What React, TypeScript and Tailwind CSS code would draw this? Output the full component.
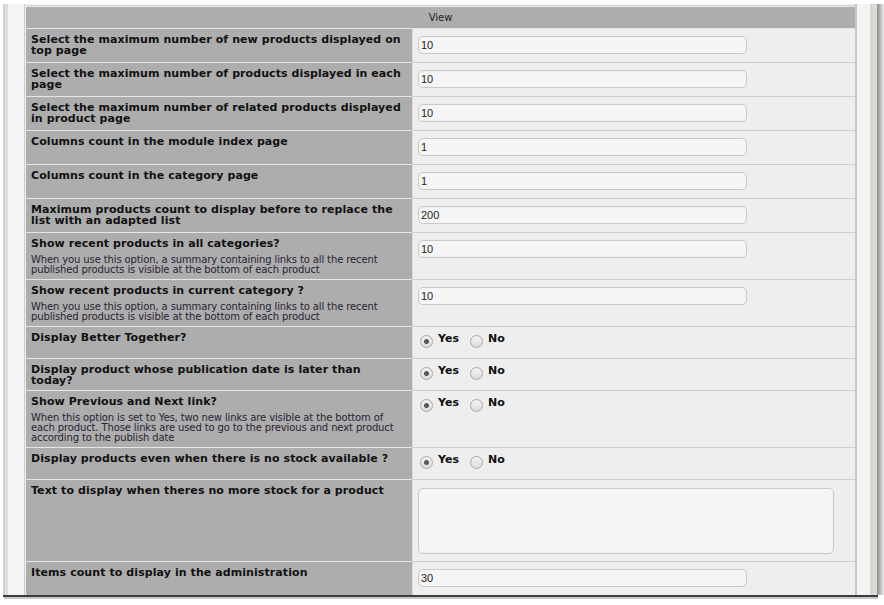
import React from 'react';

type Row = {
  label: string;
  help?: string;
  kind: 'text' | 'radio' | 'area';
  value?: string;
};

const rows: Row[] = [
  { label: 'Select the maximum number of new products displayed on top page', kind: 'text', value: '10' },
  { label: 'Select the maximum number of products displayed in each page', kind: 'text', value: '10' },
  { label: 'Select the maximum number of related products displayed in product page', kind: 'text', value: '10' },
  { label: 'Columns count in the module index page', kind: 'text', value: '1' },
  { label: 'Columns count in the category page', kind: 'text', value: '1' },
  { label: 'Maximum products count to display before to replace the list with an adapted list', kind: 'text', value: '200' },
  {
    label: 'Show recent products in all categories?',
    help: 'When you use this option, a summary containing links to all the recent published products is visible at the bottom of each product',
    kind: 'text',
    value: '10',
  },
  {
    label: 'Show recent products in current category ?',
    help: 'When you use this option, a summary containing links to all the recent published products is visible at the bottom of each product',
    kind: 'text',
    value: '10',
  },
  { label: 'Display Better Together?', kind: 'radio' },
  { label: 'Display product whose publication date is later than today?', kind: 'radio' },
  {
    label: 'Show Previous and Next link?',
    help: 'When this option is set to Yes, two new links are visible at the bottom of each product. Those links are used to go to the previous and next product according to the publish date',
    kind: 'radio',
  },
  { label: 'Display products even when there is no stock available ?', kind: 'radio' },
  { label: 'Text to display when theres no more stock for a product', kind: 'area' },
  { label: 'Items count to display in the administration', kind: 'text', value: '30' },
];

const Radio: React.FC<{ checked?: boolean; text: string }> = ({ checked, text }) => (
  <label className="flex items-start mr-[11px]">
    <span className="mt-[3px] w-[13px] h-[13px] rounded-full border border-[#a9a9a9] bg-gradient-to-b from-[#f4f4f4] to-[#dcdcdc] flex items-center justify-center">
      {checked && <span className="w-[5px] h-[5px] rounded-full bg-[#5a5a5a]" />}
    </span>
    <span className="ml-[5px] font-bold text-[11px] leading-[13px] text-[#111]">{text}</span>
  </label>
);

const SettingRow: React.FC<{ row: Row }> = ({ row }) => (
  <div className="flex">
    <div className="w-[386px] bg-[#adadad] border-b border-[#e6e6e6] pl-[5px] pr-[8px] pt-[5px] pb-[4px]">
      <div className="font-bold text-[11px] leading-[11px] tracking-[0.08px] text-[#111]">{row.label}</div>
      {row.help && (
        <div className="mt-[6px] text-[10px] leading-[10px] tracking-[-0.12px] text-[#2a2233]">{row.help}</div>
      )}
    </div>
    <div className="w-[443px] bg-[#eeeeee] border-b border-l border-l-[#dddddd] border-b-[#cfcfcf] pl-[5px]">
      {row.kind === 'text' && (
        <div className="pt-[7px] pb-[8px]">
          <div className="w-[329px] h-[18px] rounded-[5px] border border-[#c8c8c8] bg-[#f5f5f5] pl-[2px] text-[11px] leading-[16px] text-[#222] font-['Liberation_Sans',Arial,sans-serif]">
            {row.value}
          </div>
        </div>
      )}
      {row.kind === 'radio' && (
        <div className="flex min-h-[31px] pt-[5px] pl-[2px]">
          <Radio checked text="Yes" />
          <Radio text="No" />
        </div>
      )}
      {row.kind === 'area' && (
        <div className="pt-[8px] pb-[7px]">
          <div className="w-[416px] h-[66px] rounded-[5px] border border-[#c8c8c8] bg-[#f5f5f5]" />
        </div>
      )}
    </div>
  </div>
);

const App: React.FC = () => {
  return (
    <div className="w-[884px] h-[605px] bg-white overflow-hidden font-['DejaVu_Sans',Verdana,sans-serif]">
      <div className="h-[4px] bg-white" />
      <div className="flex h-[591px] ml-[3px]">
        <div className="w-[2px] bg-[#d2d2d2]" />
        <div className="w-[3px] bg-[#e1ded5]" />
        <div className="w-[16px] bg-[#f4f4f4]" />
        <div className="w-[1px] bg-[#cccccc]" />
        <div className="w-[1px] bg-[#f0f0f0]" />
        <div className="w-[829px] overflow-hidden bg-[#eeeeee]">
          <div className="h-[1px] bg-[#f4f4f4]" />
          <div className="h-[1px] bg-[#d0d0d0]" />
          <div className="h-[1px] bg-[#eeeeee]" />
          <div className="h-[22px] bg-[#adadad] text-center text-[10px] leading-[21px] text-[#222] border-b border-[#e6e6e6]">
            View
          </div>
          {rows.map((row, i) => (
            <SettingRow key={i} row={row} />
          ))}
        </div>
        <div className="w-[2px] bg-[#c8c8c8]" />
        <div className="w-[13px] bg-[#f4f4f4]" />
        <div className="w-[3px] bg-[#d6d6d6]" />
        <div className="w-[4px] bg-[#dedbd2]" />
        <div className="w-[7px] bg-gradient-to-r from-[#8c8c8c] to-[#eeeeee]" />
      </div>
      <div className="ml-[3px] w-[875px] h-[2px] bg-[#3c3c3c]" />
      <div className="ml-[4px] w-[874px] h-[2px] bg-[#c8c8c8]" />
    </div>
  );
};

export default App;
